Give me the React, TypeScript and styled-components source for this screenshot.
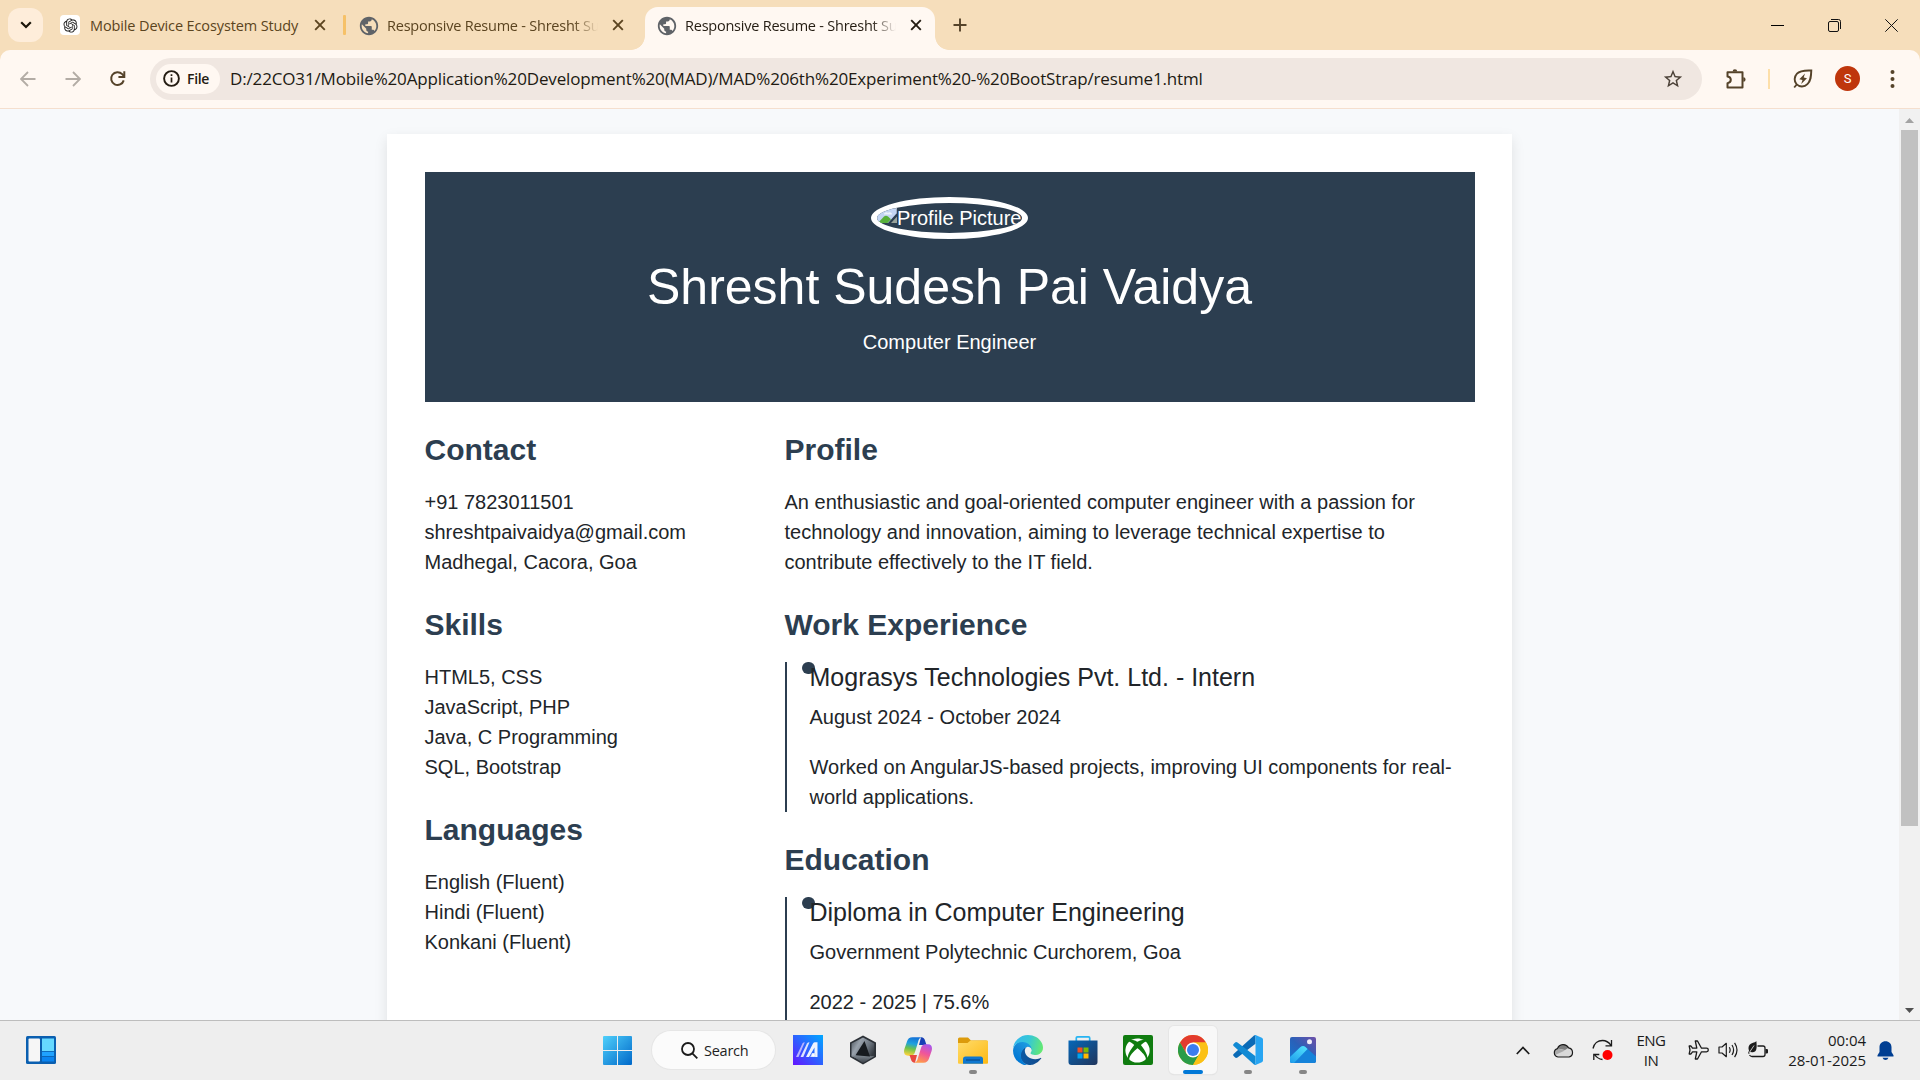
import React from "react";
import styled, { createGlobalStyle, css } from "styled-components";
import { RiOpenaiFill } from "react-icons/ri";
import { MdPublic, MdStarBorder } from "react-icons/md";
import { FaXbox } from "react-icons/fa";

const navy = "#2c3e50";
const uiFont = `"Open Sans", "Noto Sans", sans-serif`;

const GlobalStyle = createGlobalStyle`
  *, *::before, *::after { box-sizing: border-box; }
  html, body { margin: 0; padding: 0; overflow: hidden; }
  h1, h3, h5, p { margin: 0; }
  svg { display: block; flex: none; }
`;

const Screen = styled.div`
  width: 1920px;
  height: 1080px;
  display: flex;
  flex-direction: column;
  overflow: hidden;
  font-family: ${uiFont};
  background: #f6debb;
`;

/* ---------- tab strip ---------- */

const TabStrip = styled.div`
  height: 50px;
  flex: none;
  display: flex;
  align-items: flex-start;
  padding-left: 8px;
`;

const TabSearch = styled.div`
  width: 35px;
  height: 34px;
  margin: 8px 6px 0 0;
  border-radius: 12px;
  background: #feedda;
  display: grid;
  place-items: center;
`;

const Tab = styled.div<{ $active?: boolean }>`
  position: relative;
  width: 290px;
  height: 43px;
  margin-top: 7px;
  padding: 0 10.5px 7px 11px;
  display: flex;
  align-items: center;
  color: #5b4420;
  ${(p) =>
    p.$active &&
    css`
      background: #fff8f2;
      color: #241c12;
      border-radius: 13px 13px 0 0;
      &::before,
      &::after {
        content: "";
        position: absolute;
        bottom: 0;
        width: 14px;
        height: 14px;
      }
      &::before {
        left: -14px;
        background: radial-gradient(circle at 0 0, transparent 13.5px, #fff8f2 14.2px);
      }
      &::after {
        right: -14px;
        background: radial-gradient(circle at 100% 0, transparent 13.5px, #fff8f2 14.2px);
      }
    `}
`;

const TabTitle = styled.span<{ $fade?: boolean; $spacing: number }>`
  width: 211px;
  margin: 1px 0 0 10px;
  font-size: 14.5px;
  line-height: 22px;
  letter-spacing: ${(p) => p.$spacing}px;
  white-space: nowrap;
  overflow: hidden;
  ${(p) =>
    p.$fade &&
    css`
      mask-image: linear-gradient(90deg, #000 186px, transparent 211px);
    `}
`;

const TabClose = styled.span`
  margin-left: auto;
  width: 18px;
  display: grid;
  place-items: center;
`;

const Favicon = styled.span<{ $boxed?: boolean }>`
  width: ${(p) => (p.$boxed ? 20 : 19)}px;
  height: 20px;
  border-radius: 4px;
  background: ${(p) => (p.$boxed ? "#fff" : "transparent")};
  color: ${(p) => (p.$boxed ? "#222" : "#5f6368")};
  display: grid;
  place-items: center;
  flex: none;
`;

const TabGap = styled.div<{ $line?: boolean }>`
  width: 8px;
  height: 50px;
  display: grid;
  place-items: center;
  &::before {
    content: "";
    width: 3px;
    height: 20px;
    margin-left: 2px;
    border-radius: 1px;
    background: ${(p) => (p.$line ? "#f6c168" : "transparent")};
  }
`;

const NewTab = styled.div`
  width: 50px;
  height: 50px;
  display: grid;
  place-items: center;
`;

const WindowButtons = styled.div`
  margin-left: auto;
  height: 50px;
  display: flex;
  align-items: center;
`;

const WindowButton = styled.div`
  width: 57px;
  display: grid;
  place-items: center;
`;

/* ---------- toolbar ---------- */

const Toolbar = styled.div`
  height: 59px;
  flex: none;
  display: flex;
  align-items: center;
  padding: 0 0 1px 5px;
  background: #fff8f2;
  border-radius: 10px 10px 0 0;
  border-bottom: 1px solid #f5dfce;
`;

const NavButton = styled.div<{ $dim?: boolean }>`
  width: 45px;
  display: grid;
  place-items: center;
  color: ${(p) => (p.$dim ? "#b3aca5" : "#55432a")};
`;

const Omnibox = styled.div`
  width: 1552px;
  height: 42px;
  margin-left: 10px;
  padding: 0 18px 0 6px;
  border-radius: 21px;
  background: #f0e7e1;
  display: flex;
  align-items: center;
`;

const FileChip = styled.div`
  width: 64px;
  height: 30px;
  padding-left: 7px;
  border-radius: 15px;
  background: #fff8f2;
  display: flex;
  align-items: center;
  gap: 7px;
  font-size: 14px;
  font-weight: 600;
  letter-spacing: -0.3px;
  color: #241c12;
`;

const Url = styled.span`
  margin: 1px 0 0 10px;
  font-size: 17px;
  line-height: 24px;
  letter-spacing: -0.155px;
  color: #211a12;
  white-space: nowrap;
`;

const StarSlot = styled.span`
  margin-left: auto;
  color: #4b4137;
`;

const ToolbarActions = styled.div`
  flex: 1;
  display: flex;
  align-items: center;
  padding-left: 23px;
`;

const ToolbarDivider = styled.div`
  width: 2px;
  height: 20px;
  margin: 0 23px 0 21px;
  background: #fddfa9;
`;

const Avatar = styled.div`
  width: 25px;
  height: 25px;
  margin: 0 30px 0 22px;
  border-radius: 50%;
  background: #bf360c;
  color: #fff;
  font-family: Roboto, sans-serif;
  font-size: 13px;
  line-height: 26px;
  text-align: center;
`;

/* ---------- page ---------- */

const Viewport = styled.div`
  height: 911px;
  flex: none;
  display: flex;
  background: #f7f9fb;
`;

const Page = styled.main`
  width: 1899px;
  height: 911px;
  overflow: hidden;
  padding-top: 25px;
  font-family: "Liberation Sans", Arial, sans-serif;
  font-size: 20px;
  line-height: 30px;
  color: #212529;
`;

const Sheet = styled.div`
  width: 1125px;
  height: 1200px;
  margin: 0 auto;
  padding: 37.5px;
  background: #fff;
  box-shadow: 0 5px 12.5px rgba(0, 0, 0, 0.1);
`;

const Banner = styled.header`
  height: 230px;
  padding: 25px;
  background: ${navy};
  color: #fff;
  display: flex;
  flex-direction: column;
  align-items: center;
`;

const Portrait = styled.div`
  width: 157px;
  height: 42px;
  border: 6px solid #fff;
  border-radius: 50%;
  overflow: hidden;
  display: flex;
  align-items: flex-start;
  white-space: nowrap;
  svg {
    margin-top: 5px;
  }
`;

const Name = styled.h1`
  margin: 18.5px 0 10px;
  font-size: 50px;
  font-weight: 500;
  line-height: 60px;
`;

const Columns = styled.div`
  display: grid;
  grid-template-columns: 330px 690px;
  column-gap: 30px;
  padding-top: 30.5px;
`;

const Section = styled.section`
  margin-bottom: 30.5px;
`;

const Heading = styled.h3`
  margin-bottom: 18.5px;
  font-size: 30px;
  font-weight: 700;
  line-height: 36px;
  color: ${navy};
`;

const Timeline = styled.div`
  padding: 0 0 0 23px;
  border-left: 2px solid ${navy};
`;

const Entry = styled.article<{ $last?: boolean }>`
  position: relative;
  padding-bottom: ${(p) => (p.$last ? 25 : 0)}px;
  &::before {
    content: "";
    position: absolute;
    left: -7.5px;
    top: 0;
    width: 12.5px;
    height: 12.5px;
    border-radius: 50%;
    background: ${navy};
  }
`;

const EntryTitle = styled.h5`
  position: relative;
  margin-bottom: 10px;
  font-size: 25px;
  font-weight: 500;
  line-height: 30px;
`;

const EntryText = styled.p`
  & + & {
    margin-top: 20px;
  }
`;

const Scrollbar = styled.div`
  width: 21px;
  display: flex;
  flex-direction: column;
  align-items: center;
  background: #f1f1f1;
`;

const ScrollArrow = styled.div<{ $down?: boolean }>`
  height: 21px;
  padding-top: 2px;
  display: grid;
  place-items: center;
  color: ${(p) => (p.$down ? "#505050" : "#a3a3a3")};
  margin-top: ${(p) => (p.$down ? "auto" : 0)};
`;

const ScrollThumb = styled.div`
  width: 17px;
  height: 696px;
  background: #c1c1c1;
`;

/* ---------- taskbar ---------- */

const Taskbar = styled.footer`
  height: 60px;
  flex: none;
  display: flex;
  align-items: flex-start;
  background: #eeeeee;
  border-top: 1px solid #bdbdbd;
`;

const WidgetsSlot = styled.div`
  width: 590px;
  height: 58px;
  padding-left: 26px;
  display: flex;
  align-items: center;
`;

const AppSlot = styled.div<{ $state?: "open" | "active" }>`
  width: 55px;
  height: 58px;
  display: grid;
  place-items: center;
  position: relative;
  &::before {
    content: "";
    position: absolute;
    inset: 5px 3.5px 5px;
    border-radius: 5px;
    background: ${(p) => (p.$state === "active" ? "#f8f8f8" : "transparent")};
    box-shadow: ${(p) => (p.$state === "active" ? "0 0 0 1px #e6e6e6, 0 1px 1px #d2d2d2" : "none")};
  }
  &::after {
    content: "";
    position: absolute;
    bottom: 5px;
    width: ${(p) => (p.$state === "active" ? 20 : 8)}px;
    height: 4px;
    border-radius: 2px;
    background: ${(p) => (p.$state === "active" ? "#0078d7" : p.$state === "open" ? "#868686" : "transparent")};
  }
  svg {
    position: relative;
  }
`;

const SearchPill = styled.div`
  width: 123px;
  height: 38px;
  margin: 10px 5px 0 7px;
  padding-left: 29px;
  border-radius: 19px;
  background: #fbfbfb;
  box-shadow: 0 0 0 1px #e6e6e6;
  display: flex;
  align-items: center;
  gap: 6px;
  font-size: 14.5px;
  letter-spacing: -0.25px;
  color: #1f1f1f;
`;

const Tray = styled.div`
  margin-left: auto;
  height: 58px;
  padding-right: 15px;
  display: flex;
  align-items: center;
  color: #1b1b1b;
`;

const TrayItem = styled.div<{ $w: number }>`
  width: ${(p) => p.$w}px;
  display: grid;
  place-items: center;
`;

const TrayText = styled.div<{ $w: number; $align: "center" | "right"; $spacing: number }>`
  width: ${(p) => p.$w}px;
  font-size: 15px;
  line-height: 20px;
  letter-spacing: ${(p) => p.$spacing}px;
  text-align: ${(p) => p.$align};
  white-space: nowrap;
`;

/* ---------- icons ---------- */

const CloseIcon = () => (
  <svg width="12" height="12" viewBox="0 0 12 12" stroke="currentColor" strokeWidth="1.9">
    <path d="M1.2 1.2l9.6 9.6M10.8 1.2l-9.6 9.6" />
  </svg>
);

const ArrowIcon = ({ flip }: { flip?: boolean }) => (
  <svg width="16" height="16" viewBox="0 0 16 16" fill="none" stroke="currentColor" strokeWidth="1.8">
    <path d={flip ? "M0.5 8h14M8 1l7 7-7 7" : "M15.5 8h-14M8 1L1 8l7 7"} />
  </svg>
);

const ReloadIcon = () => (
  <svg width="17" height="17" viewBox="0 0 18 18" fill="none" stroke="currentColor" strokeWidth="2.1">
    <path d="M15.6 11A6.8 6.8 0 1 1 14 4.4L16 6.6" />
    <path d="M16.2 1.2v6.2H10" />
  </svg>
);

const InfoIcon = () => (
  <svg width="17" height="17" viewBox="0 0 17 17" fill="none" stroke="currentColor">
    <circle cx="8.5" cy="8.5" r="7.4" strokeWidth="1.9" />
    <path d="M8.5 7.6v5M8.5 4.2v1.9" strokeWidth="1.7" />
  </svg>
);

const PuzzleIcon = () => (
  <svg width="22" height="22" viewBox="0 0 22 22" fill="none" stroke="#55432a" strokeWidth="2">
    <path d="M2.5 4.2h15v15.3h-15v-4.3c4.4-.6 4.4-6.1 0-6.7z" strokeLinejoin="round" />
    <path d="M7.6 3.5a2.3 2.3 0 0 1 4.6 0zM18.3 9.2a2.3 2.3 0 0 1 0 4.6z" fill="#55432a" stroke="none" />
  </svg>
);

const LeafIcon = () => (
  <svg width="20" height="20" viewBox="0 0 20 20" fill="none" stroke="#55432a" strokeWidth="1.9">
    <path d="M18.3 1.5c-6 .2-11-.3-14.3 3.2-3 3.2-3 7.5-.6 10.3 2.800 3.2 8 3.300 11 .2 3.5-3.500 3.7-8 3.900-13.700z" />
    <path d="M1.2 18.500l3-3.500" />
    <path d="M12 4.500L6.300 10.300l3.200.6-1.300 4 5.800-5.700-3.300-.8z" fill="#55432a" stroke="none" />
  </svg>
);

const BrokenImage = () => (
  <svg width="20" height="16" viewBox="0 0 20 16">
    <path d="M0 0h20v5L11 15H0z" fill="#c3d5f3" />
    <path d="M7 6.500a2.500 2 0 0 1 4-1.800 2.500 2 0 0 1 4 1.800z" fill="#eef4fd" />
    <path d="M1 15l6-6.500q2-1.500 4 0l3 2.800-3.500 3.700z" fill="#58b03a" />
    <path d="M20 8.500V15h-6z" fill="#9aa39c" />
    <path d="M19.500 5V.5H0V15" fill="none" stroke="#9aa6b5" strokeWidth=".8" />
  </svg>
);

const WidgetsIcon = () => (
  <svg width="30" height="28" viewBox="0 0 30 28">
    <rect width="30" height="28" rx="1.500" fill="#0a5fb0" />
    <rect x="2.500" y="2.500" width="11.500" height="23" rx="1" fill="#f6f6f6" />
    <rect x="16" y="2.500" width="12" height="12.500" fill="#66d9ff" />
    <rect x="16" y="15.800" width="12" height="4.300" fill="#1fa2ff" />
    <rect x="16" y="21" width="12" height="4.500" fill="#0a84f0" />
  </svg>
);

const WindowsIcon = () => (
  <svg width="29" height="29" viewBox="0 0 29 29">
    <defs>
      <linearGradient id="win" x1="0" y1="0" x2="29" y2="29" gradientUnits="userSpaceOnUse">
        <stop offset="0" stopColor="#4fd0fb" />
        <stop offset="1" stopColor="#0068c9" />
      </linearGradient>
    </defs>
    <path d="M1 0h13v14H0V1q0-1 1-1zM15 0h13q1 0 1 1v13H15zM0 15h14v14H1q-1 0-1-1zM15 15h14v13q0 1-1 1H15z" fill="url(#win)" />
  </svg>
);

const SearchIcon = () => (
  <svg width="17" height="17" viewBox="0 0 17 17" fill="none" stroke="#1b1b1b" strokeWidth="1.800">
    <circle cx="7" cy="7" r="6" />
    <path d="M11.300 11.300l5 5" />
  </svg>
);

const MyAsusIcon = () => (
  <svg width="30" height="30" viewBox="0 0 30 30">
    <defs>
      <linearGradient id="asus" x1="0" y1="1" x2="1" y2="0">
        <stop offset="0" stopColor="#6414ff" />
        <stop offset=".5" stopColor="#2d62ff" />
        <stop offset="1" stopColor="#00a8ff" />
      </linearGradient>
    </defs>
    <rect width="30" height="30" fill="url(#asus)" />
    <path d="M3 22L9.500 8.500q.7-1.300 2.300-1.300L5.500 22z" fill="#b9b4ff" />
    <path d="M7.500 22L14 8.500q.7-1.300 2.500-1.300L10.300 22z" fill="#dfe4ff" />
    <path d="M13 22L20 8.500q.7-1.300 2-1.300h2.500V22h-3V12.500L16 22z" fill="#eef4ff" />
    <path d="M19 18h3.500v4h-5.300z" fill="#cfe0ff" />
    <circle cx="20.300" cy="20.300" r="1.300" fill="#fff" />
  </svg>
);

const ArmouryIcon = () => (
  <svg width="28" height="30" viewBox="0 0 28 30">
    <defs>
      <linearGradient id="arm" x1="0" y1="0" x2="1" y2=".6">
        <stop offset="0" stopColor="#4a525b" />
        <stop offset=".35" stopColor="#98a1ab" />
        <stop offset=".7" stopColor="#6d7680" />
        <stop offset="1" stopColor="#343a41" />
      </linearGradient>
      <linearGradient id="arb" x1="0" y1="0" x2="0" y2="1">
        <stop offset="0" stopColor="#7f8891" />
        <stop offset="1" stopColor="#3a4047" />
      </linearGradient>
    </defs>
    <path d="M14 .5L27 7.500v14.500L14 29.500 1 22V7.500z" fill="#2b3036" />
    <path d="M14 2.500L25.300 8.500v12.800L14 26 2.500 21.300V8.500z" fill="url(#arm)" />
    <path d="M2.500 20.500L14 21l11.300.300L14 28z" fill="url(#arb)" />
    <path d="M15.500 6L6.500 20.300l14.500 1.200z" fill="#171b1f" />
  </svg>
);

const CopilotIcon = () => (
  <svg width="28" height="26" viewBox="0 0 28 26">
    <defs>
      <linearGradient id="cpa" x1=".5" y1="0" x2=".3" y2="1">
        <stop offset="0" stopColor="#1473d8" />
        <stop offset=".35" stopColor="#1ea2dd" />
        <stop offset=".62" stopColor="#6cc24a" />
        <stop offset="1" stopColor="#ffd23c" />
      </linearGradient>
      <linearGradient id="cpb" x1=".8" y1="0" x2=".4" y2="1">
        <stop offset="0" stopColor="#a557ef" />
        <stop offset=".5" stopColor="#f0559a" />
        <stop offset="1" stopColor="#ff9a4a" />
      </linearGradient>
    </defs>
    <path d="M17 .3c2.500 0 3.500 1.500 4 3.200L22.500 8H15z" fill="#173fb5" />
    <path d="M8.500.3H18c-3 .5-3.500 3-4 5l-3 9.700c-.8 2.500-2 3.700-4.500 3.700H4c-4 0-4.500-3.500-3.600-6.700L3 4.500C3.800 1.800 5.500.3 8.500.3z" fill="url(#cpa)" />
    <path d="M11 25.700c-2.500 0-3.500-1.500-4-3.200L5.500 18H13z" fill="#e8483f" />
    <path d="M19.500 25.700H10c3-.5 3.500-3 4-5l3-9.700c.8-2.500 2-3.700 4.500-3.700H24c4 0 4.500 3.500 3.600 6.700L25 21.500c-.8 2.700-2.500 4.200-5.500 4.200z" fill="url(#cpb)" />
  </svg>
);

const FolderIcon = () => (
  <svg width="30" height="27" viewBox="0 0 30 27">
    <defs>
      <linearGradient id="fold" x1="0" y1="0" x2="1" y2="1">
        <stop offset="0" stopColor="#ffdc6b" />
        <stop offset="1" stopColor="#fdb913" />
      </linearGradient>
    </defs>
    <path d="M0 2q0-1.500 1.500-1.500H10l3 3H28q2 0 2 2V9H0z" fill="#dc9b0c" />
    <path d="M0 6h9.500l3-2.500H29q1 0 1 1V26q0 .7-1 .7H1Q0 26.700 0 26z" fill="url(#fold)" />
    <path d="M5 26.700V22q0-2.500 2.500-2.500h15Q25 19.500 25 22v4.700z" fill="#0f78d0" />
    <path d="M8 23h14" stroke="#0a4f94" strokeWidth="1.300" />
  </svg>
);

const EdgeIcon = () => (
  <svg width="30" height="30" viewBox="0 0 256 256">
    <defs>
      <linearGradient id="ea" x1="63" y1="178" x2="241" y2="178" gradientUnits="userSpaceOnUse">
        <stop offset="0" stopColor="#0c59a4" />
        <stop offset="1" stopColor="#114a8b" />
      </linearGradient>
      <linearGradient id="eb" x1="157" y1="100" x2="46" y2="221" gradientUnits="userSpaceOnUse">
        <stop offset="0" stopColor="#1b9de2" />
        <stop offset=".5" stopColor="#1387d8" />
        <stop offset="1" stopColor="#0078d4" />
      </linearGradient>
      <linearGradient id="ec" x1="0" y1="40" x2="256" y2="110" gradientUnits="userSpaceOnUse">
        <stop offset="0" stopColor="#35b8f1" />
        <stop offset=".5" stopColor="#36c7d6" />
        <stop offset="1" stopColor="#66eb6e" />
      </linearGradient>
    </defs>
    <path fill="url(#ea)" d="M235.700 195.500a93.700 93.700 0 0 1-10.600 4.700 101.900 101.900 0 0 1-35.900 6.400c-47.300 0-88.500-32.500-88.500-74.300a31.500 31.500 0 0 1 16.400-27.300c-42.800 1.800-53.800 46.400-53.800 72.500 0 73.900 68.100 78.500 82.800 78.500 7.900 0 19.800-2.300 27-4.600l1.300-.4a128.300 128.300 0 0 0 66.600-50 4 4 0 0 0-5.300-5.500z" />
    <path fill="url(#eb)" d="M105.700 246.400A79.200 79.200 0 0 1 83 225a80.700 80.700 0 0 1 29.500-120c3.100-1.500 8.500-4.100 15.500-4a32.400 32.400 0 0 1 25.700 13 31.900 31.900 0 0 1 6.400 18.700c0-.2 24.500-79.600-80-79.600-43.900 0-80 41.600-80 78.200a130.200 130.200 0 0 0 12.100 56 128 128 0 0 0 156.400 67.100 75.500 75.500 0 0 1-62.900-8z" />
    <path fill="url(#ec)" d="M152.300 148.900c-.8 1-3.300 2.500-3.300 5.700 0 2.600 1.700 5.100 4.700 7.200 14.400 10 41.500 8.700 41.600 8.700a59.600 59.600 0 0 0 30.300-8.400A61.400 61.400 0 0 0 256 109.200c.3-22.400-8-37.300-11.300-43.900C223.500 23.900 177.700 0 128 0A128 128 0 0 0 0 126.200c.5-36.500 36.800-66 80-66 3.500 0 23.500.3 42 10 16.300 8.600 24.900 19 30.900 29.200 6.200 10.700 7.300 24.200 7.300 29.600s-2.800 13.300-7.900 19.900z" />
  </svg>
);

const StoreIcon = () => (
  <svg width="30" height="30" viewBox="0 0 30 30">
    <defs>
      <linearGradient id="store" x1="0" y1="0" x2="1" y2="1">
        <stop offset="0" stopColor="#0667b8" />
        <stop offset="1" stopColor="#20355c" />
      </linearGradient>
    </defs>
    <path d="M8.300 6V3q0-1.200 1.200-1.200h11Q21.700 1.800 21.700 3v3" fill="none" stroke="#27b4f2" strokeWidth="1.700" />
    <path d="M.5 5.500h29V27q0 3-3 3h-23q-3 0-3-3z" fill="url(#store)" />
    <path d="M9.500 12.500h5v5h-5z" fill="#f25022" />
    <path d="M15.500 12.500h5v5h-5z" fill="#7fba00" />
    <path d="M9.500 18.500h5v5h-5z" fill="#00a4ef" />
    <path d="M15.500 18.500h5v5h-5z" fill="#ffb900" />
  </svg>
);

const XboxTile = styled.span`
  position: relative;
  width: 30px;
  height: 30px;
  border-radius: 2px;
  background: #107c10;
  color: #fff;
  display: grid;
  place-items: center;
`;

const ChromeIcon = () => (
  <svg width="30" height="30" viewBox="0 0 48 48">
    <circle cx="24" cy="24" r="24" fill="#fbc116" />
    <path d="M24 12h20.800A24 24 0 0 0 3.200 12L13.600 30z" fill="#e33b2e" />
    <path d="M34.400 30L24 48A24 24 0 0 1 3.200 12l10.400 18z" fill="#2b9c48" />
    <path d="M24 12h20.800A24 24 0 0 1 24 48l10.400-18z" fill="#fbc116" />
    <circle cx="24" cy="24" r="12" fill="#fff" />
    <circle cx="24" cy="24" r="9.600" fill="#3b7df0" />
  </svg>
);

const VsCodeIcon = () => (
  <svg width="30" height="30" viewBox="0 0 100 100">
    <path d="M2 63q-3 4 0 7l5 5q3 3 8 0L75 29V0L70 2z" fill="#0a6ab6" />
    <path d="M2 37q-3-4 0-7l5-5q3-3 8 0l60 46v29l-5-2z" fill="#118ad4" />
    <path d="M72 0q2-1 5 .5L96 9q4 2 4 6v70q0 4-4 6l-19 8.500q-3 1.500-5 .5l3-4V4z" fill="#27a5f2" />
  </svg>
);

const PhotosIcon = () => (
  <svg width="26" height="26" viewBox="0 0 26 26">
    <defs>
      <linearGradient id="pho" x1="0" y1="1" x2="1" y2="0">
        <stop offset="0" stopColor="#1378d4" />
        <stop offset=".5" stopColor="#2a60b8" />
        <stop offset="1" stopColor="#6f50a8" />
      </linearGradient>
      <linearGradient id="phm" x1="0" y1="1" x2=".7" y2="0">
        <stop offset="0" stopColor="#1d9bea" />
        <stop offset="1" stopColor="#4ddcfc" />
      </linearGradient>
    </defs>
    <rect width="26" height="26" rx="2" fill="url(#pho)" />
    <path d="M0 20L10.500 10q2.500-2 5 0L26 19.500V24q0 2-2 2H2q-2 0-2-2z" fill="#1583da" />
    <path d="M0 20L10.500 10q2.500-2 5 0l2 2L4 26H2q-2 0-2-2z" fill="url(#phm)" />
    <circle cx="19.500" cy="4.700" r="2.500" fill="#f1eefa" />
  </svg>
);

const CloudIcon = () => (
  <svg width="21" height="15" viewBox="0 0 21 15">
    <path d="M5 14a4.300 4.300 0 0 1-.5-8.400A6 6 0 0 1 15.500 4.800 4.700 4.700 0 0 1 16 14z" fill="#d9d9d9" />
    <path d="M4.500 5.600A6 6 0 0 1 15.500 4.800L12 7z" fill="#7e7e7e" />
    <path d="M2 12a4.300 4.300 0 0 1 2.500-6.400L12 7.500z" fill="#a9a9a9" />
    <path d="M5 14a4.300 4.300 0 0 1-.5-8.400A6 6 0 0 1 15.500 4.800 4.700 4.700 0 0 1 16 14z" fill="none" stroke="#1b1b1b" strokeWidth="1.200" />
  </svg>
);

const SyncIcon = () => (
  <svg width="22" height="22" viewBox="0 0 22 22" fill="none" stroke="#1b1b1b" strokeWidth="1.300">
    <path d="M1 9.500C2 4.500 6 1.500 10.500 1.500c3.600 0 6.500 2 8.500 4.800M19.500 1v5.800h-6" />
    <path d="M10.500 20.500C7 20 4.500 18.500 2.500 15.500M1.800 21v-5.500h5.500" />
    <circle cx="15.500" cy="16" r="5" fill="#f00" stroke="none" />
  </svg>
);

const PlaneIcon = () => (
  <svg width="21" height="20" viewBox="0 0 21 20" fill="none" stroke="#1b1b1b" strokeWidth="1.300" strokeLinejoin="round">
    <path d="M18.500 8.200h-5L9.500 1H7.300l1.500 7.200H4.500L3 6H1.200L2 10l-.8 4H3l1.500-2.200h4.300L7.300 19h2.200l4-7.200h5a1.800 1.800 0 0 0 0-3.600z" />
  </svg>
);

const SpeakerIcon = () => (
  <svg width="21" height="18" viewBox="0 0 21 18" fill="none" stroke="#1b1b1b" strokeWidth="1.200">
    <path d="M1 6h3l4.300-3.700v13.400L4 12H1z" strokeLinejoin="round" />
    <path d="M11.300 6.300q1.700 2.700 0 5.400M14 4q3.200 5 0 10M16.600 1.800q4.800 7.200 0 14.400" />
  </svg>
);

const BatteryIcon = () => (
  <svg width="21" height="18" viewBox="0 0 21 18" fill="none" stroke="#1b1b1b" strokeWidth="1.300">
    <path d="M9.500 5H15q2 0 2 2v6.500q0 2-2 2H4q-1.500 0-2.500-1.500" />
    <path d="M17.500 8v4.500h1.200q1.300 0 1.300-1V9q0-1-1.300-1z" fill="#1b1b1b" stroke="none" />
    <path d="M8.300 0Q8.800 3 8.600 6.500 8.300 11 5 11.200q-1.500 0-2.500-.5L1 13 0 12q.7-1.500 1-2.500C-.5 5.500 1.500 3 4.500 2 6.500 1.500 7.500 1 8.300 0z" fill="#1b1b1b" stroke="none" />
    <path d="M6 4.500L1 12" stroke="#eee" strokeWidth=".8" />
  </svg>
);

const BellIcon = () => (
  <svg width="17" height="19" viewBox="0 0 17 19" fill="#003e92">
    <path d="M8.500.3C12 .3 14.500 2.800 14.500 6.300V11l2 3.200v1.300H.5v-1.300l2-3.200V6.300C2.500 2.800 5 .3 8.500.3zM5.500 16.700h6Q10.500 19 8.500 19t-3-2.300z" />
  </svg>
);

/* ---------- content ---------- */

const sidebar = [
  { title: "Contact", lines: ["+91 7823011501", "shreshtpaivaidya@gmail.com", "Madhegal, Cacora, Goa"] },
  { title: "Skills", lines: ["HTML5, CSS", "JavaScript, PHP", "Java, C Programming", "SQL, Bootstrap"] },
  { title: "Languages", lines: ["English (Fluent)", "Hindi (Fluent)", "Konkani (Fluent)"] },
];

const timeline = [
  {
    title: "Work Experience",
    entry: "Mograsys Technologies Pvt. Ltd. - Intern",
    texts: [
      "August 2024 - October 2024",
      "Worked on AngularJS-based projects, improving UI components for real-world applications.",
    ],
  },
  {
    title: "Education",
    entry: "Diploma in Computer Engineering",
    texts: ["Government Polytechnic Curchorem, Goa", "2022 - 2025 | 75.6%"],
  },
];

const BrowserTabs = () => (
  <TabStrip>
    <TabSearch>
      <svg width="12" height="8" viewBox="0 0 12 8" fill="none" stroke="#1b1509" strokeWidth="2.200">
        <path d="M1.200 1.200L6 6l4.800-4.800" />
      </svg>
    </TabSearch>
    <Tab>
      <Favicon $boxed>
        <RiOpenaiFill size={17} />
      </Favicon>
      <TabTitle $spacing={-0.12}>Mobile Device Ecosystem Study</TabTitle>
      <TabClose>
        <CloseIcon />
      </TabClose>
    </Tab>
    <TabGap $line />
    <Tab>
      <Favicon>
        <MdPublic size={22} />
      </Favicon>
      <TabTitle $fade $spacing={-0.23}>
        Responsive Resume - Shresht Sudesh
      </TabTitle>
      <TabClose>
        <CloseIcon />
      </TabClose>
    </Tab>
    <TabGap />
    <Tab $active>
      <Favicon>
        <MdPublic size={22} />
      </Favicon>
      <TabTitle $fade $spacing={-0.23}>
        Responsive Resume - Shresht Sudesh
      </TabTitle>
      <TabClose>
        <CloseIcon />
      </TabClose>
    </Tab>
    <NewTab>
      <svg width="14" height="14" viewBox="0 0 14 14" stroke="#55432a" strokeWidth="1.900">
        <path d="M7 .5v13M.5 7h13" />
      </svg>
    </NewTab>
    <WindowButtons>
      <WindowButton>
        <svg width="13" height="13" viewBox="0 0 13 13">
          <path d="M0 6h13v1H0z" />
        </svg>
      </WindowButton>
      <WindowButton>
        <svg width="13" height="13" viewBox="0 0 13 13" fill="none" stroke="#111" strokeWidth="1">
          <rect x=".5" y="2.500" width="10" height="10" rx="1.500" />
          <path d="M3 .5h7.500q2 0 2 2V10" />
        </svg>
      </WindowButton>
      <WindowButton>
        <svg width="13" height="13" viewBox="0 0 13 13" stroke="#111" strokeWidth="1">
          <path d="M.3.3l12.400 12.400M12.700.3L.3 12.700" />
        </svg>
      </WindowButton>
    </WindowButtons>
  </TabStrip>
);

const BrowserToolbar = () => (
  <Toolbar>
    <NavButton $dim>
      <ArrowIcon />
    </NavButton>
    <NavButton $dim>
      <ArrowIcon flip />
    </NavButton>
    <NavButton>
      <ReloadIcon />
    </NavButton>
    <Omnibox>
      <FileChip>
        <InfoIcon />
        File
      </FileChip>
      <Url>D:/22CO31/Mobile%20Application%20Development%20(MAD)/MAD%206th%20Experiment%20-%20BootStrap/resume1.html</Url>
      <StarSlot>
        <MdStarBorder size={22} />
      </StarSlot>
    </Omnibox>
    <ToolbarActions>
      <PuzzleIcon />
      <ToolbarDivider />
      <LeafIcon />
      <Avatar>S</Avatar>
      <svg width="5" height="18" viewBox="0 0 5 18" fill="#55432a">
        <circle cx="2.500" cy="2" r="2" />
        <circle cx="2.500" cy="9" r="2" />
        <circle cx="2.500" cy="16" r="2" />
      </svg>
    </ToolbarActions>
  </Toolbar>
);

const Resume = () => (
  <Page>
    <Sheet>
      <Banner>
        <Portrait>
          <BrokenImage />
          Profile Picture
        </Portrait>
        <Name>Shresht Sudesh Pai Vaidya</Name>
        <p>Computer Engineer</p>
      </Banner>
      <Columns>
        <div>
          {sidebar.map((s) => (
            <Section key={s.title}>
              <Heading>{s.title}</Heading>
              {s.lines.map((l) => (
                <p key={l}>{l}</p>
              ))}
            </Section>
          ))}
        </div>
        <div>
          <Section>
            <Heading>Profile</Heading>
            <p>
              An enthusiastic and goal-oriented computer engineer with a passion for technology and innovation, aiming
              to leverage technical expertise to contribute effectively to the IT field.
            </p>
          </Section>
          {timeline.map((s, i) => (
            <Section key={s.title}>
              <Heading>{s.title}</Heading>
              <Timeline>
                <Entry $last={i === timeline.length - 1}>
                  <EntryTitle>{s.entry}</EntryTitle>
                  {s.texts.map((t) => (
                    <EntryText key={t}>{t}</EntryText>
                  ))}
                </Entry>
              </Timeline>
            </Section>
          ))}
        </div>
      </Columns>
    </Sheet>
  </Page>
);

const WindowsTaskbar = () => (
  <Taskbar>
    <WidgetsSlot>
      <WidgetsIcon />
    </WidgetsSlot>
    <AppSlot>
      <WindowsIcon />
    </AppSlot>
    <SearchPill>
      <SearchIcon />
      Search
    </SearchPill>
    <AppSlot>
      <MyAsusIcon />
    </AppSlot>
    <AppSlot>
      <ArmouryIcon />
    </AppSlot>
    <AppSlot>
      <CopilotIcon />
    </AppSlot>
    <AppSlot $state="open">
      <FolderIcon />
    </AppSlot>
    <AppSlot>
      <EdgeIcon />
    </AppSlot>
    <AppSlot>
      <StoreIcon />
    </AppSlot>
    <AppSlot>
      <XboxTile>
        <FaXbox size={25} />
      </XboxTile>
    </AppSlot>
    <AppSlot $state="active">
      <ChromeIcon />
    </AppSlot>
    <AppSlot $state="open">
      <VsCodeIcon />
    </AppSlot>
    <AppSlot $state="open">
      <PhotosIcon />
    </AppSlot>
    <Tray>
      <TrayItem $w={40}>
        <svg width="14" height="9" viewBox="0 0 14 9" fill="none" stroke="#1b1b1b" strokeWidth="1.700">
          <path d="M.8 8L7 1.500 13.200 8" />
        </svg>
      </TrayItem>
      <TrayItem $w={40}>
        <CloudIcon />
      </TrayItem>
      <TrayItem $w={40}>
        <SyncIcon />
      </TrayItem>
      <TrayText $w={56} $align="center" $spacing={-0.5}>
        ENG
        <br />
        IN
      </TrayText>
      <TrayItem $w={38}>
        <PlaneIcon />
      </TrayItem>
      <TrayItem $w={22}>
        <SpeakerIcon />
      </TrayItem>
      <TrayItem $w={38}>
        <BatteryIcon />
      </TrayItem>
      <TrayText $w={89} $align="right" $spacing={-0.05}>
        00:04
        <br />
        28-01-2025
      </TrayText>
      <TrayItem $w={39}>
        <BellIcon />
      </TrayItem>
    </Tray>
  </Taskbar>
);

export default function App() {
  return (
    <Screen>
      <GlobalStyle />
      <BrowserTabs />
      <BrowserToolbar />
      <Viewport>
        <Resume />
        <Scrollbar>
          <ScrollArrow>
            <svg width="9" height="5" viewBox="0 0 9 5" fill="currentColor">
              <path d="M0 5L4.500 0 9 5z" />
            </svg>
          </ScrollArrow>
          <ScrollThumb />
          <ScrollArrow $down>
            <svg width="9" height="5" viewBox="0 0 9 5" fill="currentColor">
              <path d="M0 0l4.500 5L9 0z" />
            </svg>
          </ScrollArrow>
        </Scrollbar>
      </Viewport>
      <WindowsTaskbar />
    </Screen>
  );
}
